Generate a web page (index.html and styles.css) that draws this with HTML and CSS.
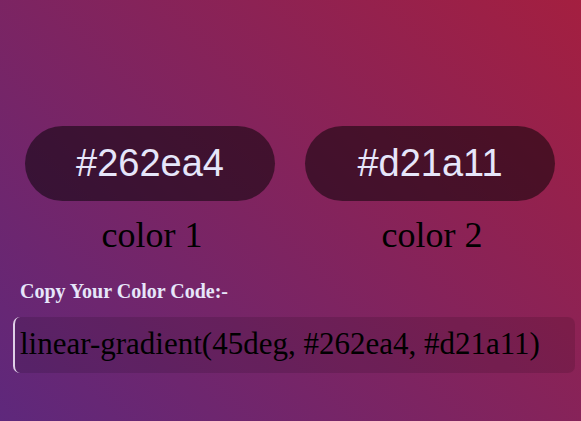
FILE: index.html
```html
<!DOCTYPE html>
<html>
<head>
    <title>Gradient Generator</title>
    <link rel="stylesheet" href="styles.css">
</head>
<body>

    <div class="main">
        <div class="colors">
            <div class="color-box">
                <div class="pill">#262ea4</div>
                <div class="label">color 1</div>
            </div>
            <div class="color-box">
                <div class="pill">#d21a11</div>
                <div class="label">color 2</div>
            </div>
        </div>

        <h3 class="copy-title">Copy Your Color Code:-</h3>
        <div class="code">linear-gradient(45deg, #262ea4, #d21a11)</div>
    </div>

</body>
</html>
```

FILE: styles.css
```css
html, body {
    margin: 0;
    height: 100%;
}

body {
    background: linear-gradient(45deg, #5e287c, #a41f40);
    font-family: "Liberation Serif", "Times New Roman", serif;
}

.main {
    padding-top: 126px;
}

.colors {
    display: flex;
    gap: 30px;
    padding: 0 25px;
}

.color-box {
    width: 250px;
    display: flex;
    flex-direction: column;
    align-items: center;
}

.pill {
    width: 250px;
    height: 75px;
    border-radius: 38px;
    background-color: rgba(0, 0, 0, 0.5);
    display: flex;
    align-items: center;
    justify-content: center;
    font-family: "Liberation Sans", Arial, sans-serif;
    font-size: 38px;
    color: #e6e6fa;
}

.label {
    margin-top: 14px;
    padding-left: 4px;
    font-size: 36px;
    line-height: 40px;
    color: #000;
}

.copy-title {
    margin: 24px 0 0 20px;
    font-size: 20px;
    line-height: 24px;
    font-weight: bold;
    color: #e6e6fa;
}

.code {
    margin: 14px 6px 0 13px;
    height: 36px;
    padding: 9px 6px 11px 5px;
    border-left: 2px solid #e0d0e8;
    border-radius: 7px;
    background-color: rgba(0, 0, 0, 0.12);
    font-size: 31px;
    line-height: 36px;
    color: #000;
    white-space: nowrap;
}
```
